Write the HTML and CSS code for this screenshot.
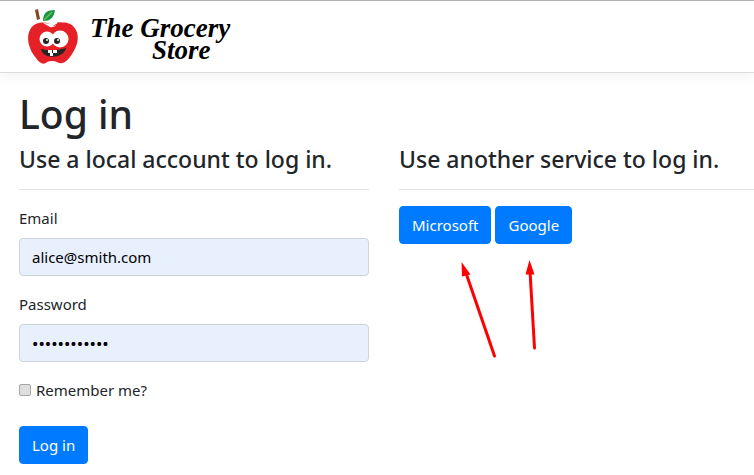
FILE: index.html
```html
<!DOCTYPE html>
<html lang="en">
<head>
<meta charset="utf-8">
<meta name="viewport" content="width=device-width, initial-scale=1">
<title>Log in - The Grocery Store</title>
<link rel="stylesheet" href="styles.css">
</head>
<body>
<header class="site-header">
  <a class="brand" href="#" aria-label="The Grocery Store">
    <svg class="brand-logo" width="216" height="63" viewBox="0 0 216 63">
      <path d="M-1 3 L2 2 L4 12 L1 13Z" transform="translate(8 0)" fill="#87451f"/>
      <path d="M15 14 C15 6 19 3 27 3 C26 9 24 14 15 14Z" fill="#159447"/>
      <path d="M16 13 L24 5" stroke="#75c043" stroke-width="1.5"/>
      <path d="M25 19 C20 14 8 14 3 21 C-3 30 1 43 8 51 C12 57 16 58 19 55 Q24 53 29 55 C34 58 38 55 42 50 C49 41 52 31 48 23 C44 15 35 14 28 17 Z" fill="#e52127"/>
      <path d="M15 16 Q22 16 26 19 L31 17 Q26 21 22 20Z" fill="#fff"/>
      <path d="M27 20 L30 15 L35 16Z" fill="#e52127"/>
      <circle cx="19" cy="32" r="7.500" fill="#fff"/><circle cx="32" cy="32" r="8.500" fill="#fff"/>
      <circle cx="18" cy="34" r="3" fill="#252525"/><circle cx="29" cy="34" r="3" fill="#252525"/>
      <circle cx="19" cy="33" r="1" fill="#fff"/><circle cx="30" cy="33" r="1" fill="#fff"/>
      <path d="M13 42 Q25 45 38 41 C36 52 15 53 13 42Z" fill="#252525"/>
      <path d="M20 43 H24 V46 H20Z M25 43 H29 V46 H25Z M22 46 H25 V49 H22Z" fill="#fff"/>
      <text class="logo-text" x="62" y="30">The Grocery</text>
      <text class="logo-text" x="124" y="52">Store</text>
    </svg>
  </a>
</header>
<main class="page">
  <h1 class="title">Log in</h1>
  <div class="columns">
    <section>
      <h2 class="subtitle">Use a local account to log in.</h2>
      <hr class="rule">
      <form>
        <div class="field">
          <label for="email">Email</label>
          <input class="control" id="email" type="email" value="alice@smith.com">
        </div>
        <div class="field">
          <label for="password">Password</label>
          <input class="control control-password" id="password" type="password" value="groceries123">
        </div>
        <div class="remember">
          <input class="check" id="remember" type="checkbox">
          <label for="remember">Remember me?</label>
        </div>
        <button class="button" type="submit">Log in</button>
      </form>
    </section>
    <section>
      <h2 class="subtitle">Use another service to log in.</h2>
      <hr class="rule">
      <div class="providers">
        <button class="button" type="button">Microsoft</button>
        <button class="button" type="button">Google</button>
      </div>
      <svg class="arrows" width="180" height="120" viewBox="0 0 180 120" fill="#f00" stroke="#f00" aria-hidden="true">
        <path d="M67 29 L95.500 112" stroke-width="3" stroke-linecap="round"/>
        <path d="M62.500 18 L71.500 30.500 L63 32.500Z" stroke="none"/>
        <path d="M131 27 L135.500 104" stroke-width="3" stroke-linecap="round"/>
        <path d="M130.500 16 L135.500 30.500 L126.500 30.500Z" stroke="none"/>
      </svg>
    </section>
  </div>
</main>
</body>
</html>
```
FILE: styles.css
```css
* {
  box-sizing: border-box;
}

body {
  margin: 0;
  background: #fff;
  color: #212529;
  font: 400 15px/24px "Noto Sans", "Open Sans", sans-serif;
}

.site-header {
  padding: 6px 28px 2px;
  border-top: 1px solid #b2b2b2;
  border-bottom: 1px solid #dcdcdc;
  box-shadow: 0 4px 12px rgba(0, 0, 0, 0.05);
}

.brand,
.brand-logo {
  display: block;
  width: fit-content;
  overflow: visible;
}

.logo-text {
  font: italic 700 27px "Liberation Serif", serif;
  fill: #000;
}

.page {
  padding: 17px 0 11px 19px;
}

.title {
  margin: 0 0 8px;
  font-size: 39px;
  font-weight: 500;
  line-height: 48px;
}

.subtitle {
  margin: 0;
  font-size: 23px;
  font-weight: 500;
  line-height: 27px;
}

.columns {
  display: grid;
  grid-template-columns: 350fr 355fr;
  gap: 30px;
}

.rule {
  margin: 16px 0;
  border: 0;
  border-top: 1px solid #e5e5e5;
}

.field {
  display: grid;
  gap: 8px;
  margin-bottom: 16px;
}

.control {
  width: 100%;
  height: 38px;
  padding: 6px 12px;
  border: 1px solid #ced4da;
  border-radius: 4px;
  background: #e8f0fe;
  color: #000;
  font: inherit;
}

.control-password {
  font-size: 17px;
}

.remember {
  display: flex;
  align-items: center;
  gap: 5px;
  margin-bottom: 24px;
}

.check {
  appearance: none;
  width: 12px;
  height: 12px;
  margin: 0;
  border: 1px solid #a6a6a6;
  border-radius: 2px;
  background: #dedede;
}

.button {
  height: 38px;
  padding: 6px 12px;
  border: 1px solid #007bff;
  border-radius: 4px;
  background: #007bff;
  color: #fff;
  font: inherit;
}

.providers {
  display: flex;
  gap: 4px;
}

.arrows {
  display: block;
}
```
